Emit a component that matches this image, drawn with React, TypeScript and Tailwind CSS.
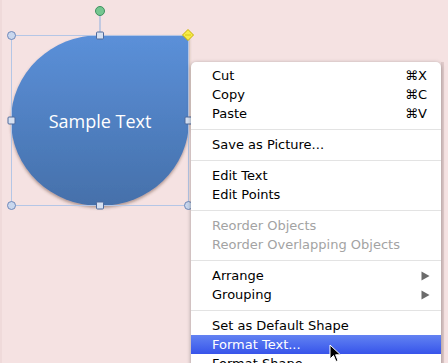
import React from "react";

type Item =
  | { kind: "item"; label: string; shortcut?: string; disabled?: boolean; sub?: boolean; active?: boolean }
  | { kind: "sep" };

const items: Item[] = [
  { kind: "item", label: "Cut", shortcut: "⌘X" },
  { kind: "item", label: "Copy", shortcut: "⌘C" },
  { kind: "item", label: "Paste", shortcut: "⌘V" },
  { kind: "sep" },
  { kind: "item", label: "Save as Picture..." },
  { kind: "sep" },
  { kind: "item", label: "Edit Text" },
  { kind: "item", label: "Edit Points" },
  { kind: "sep" },
  { kind: "item", label: "Reorder Objects", disabled: true },
  { kind: "item", label: "Reorder Overlapping Objects", disabled: true },
  { kind: "sep" },
  { kind: "item", label: "Arrange", sub: true },
  { kind: "item", label: "Grouping", sub: true },
  { kind: "sep" },
  { kind: "item", label: "Set as Default Shape" },
  { kind: "item", label: "Format Text...", active: true },
  { kind: "item", label: "Format Shape..." },
];

function Shape() {
  return (
    <svg className="absolute left-0 top-0" width="200" height="220" viewBox="0 0 200 220">
      <defs>
        <linearGradient id="g" x1="0" y1="0" x2="0" y2="1">
          <stop offset="0" stopColor="#5b90d9" />
          <stop offset="1" stopColor="#4570aa" />
        </linearGradient>
        <filter id="sh" x="-10%" y="-10%" width="120%" height="125%">
          <feDropShadow dx="0" dy="2" stdDeviation="1.5" floodColor="#5a3a2a" floodOpacity="0.45" />
        </filter>
      </defs>
      <path
        d="M 100 35 L 189 35 L 189 120.5 A 89 85.5 0 1 1 100 35 Z"
        fill="url(#g)"
        filter="url(#sh)"
      />
      <rect x="11.5" y="35.5" width="177" height="170" fill="none" stroke="#b4c6e6" strokeWidth="1" />
      <line x1="100" y1="15" x2="100" y2="32" stroke="#8fb0e0" strokeWidth="1" />
      <circle cx="100" cy="11" r="4.5" fill="#74c690" stroke="#3f9160" strokeWidth="1" />
      {[
        [11.5, 35.5],
        [11.5, 205.5],
        [188.5, 205.5],
      ].map(([x, y], i) => (
        <circle key={i} cx={x} cy={y} r="4" fill="#c9d7ee" stroke="#6f88b8" strokeWidth="1" />
      ))}
      {[
        [100, 35.5],
        [11.5, 120.5],
        [188.5, 120.5],
        [100, 205.5],
      ].map(([x, y], i) => (
        <rect key={i} x={x - 3.5} y={y - 3.5} width="7" height="7" rx="1" fill="#d6e0f1" stroke="#4f6a9c" strokeWidth="1" />
      ))}
      <path d="M 188 29.5 L 193.5 35 L 188 40.5 L 182.5 35 Z" fill="#f5ec4a" stroke="#c9b100" strokeWidth="1" />
      <line x1="185" y1="35" x2="191" y2="35" stroke="#d8c300" strokeWidth="0.8" />
    </svg>
  );
}

function Cursor() {
  return (
    <svg className="absolute left-[329px] top-[344px]" width="14" height="20" viewBox="0 0 14 20">
      <path d="M1 1 L1 15 L4.5 11.5 L7 17.5 L9 16.6 L6.6 10.8 L11.5 10.8 Z" fill="#000" stroke="#fff" strokeWidth="1" strokeLinejoin="round" />
    </svg>
  );
}

export default function App() {
  return (
    <div className="relative w-[448px] h-[363px] overflow-hidden bg-[#f5e2e2]" style={{ fontFamily: '"DejaVu Sans", sans-serif' }}>
      <div className="absolute left-0 top-0 w-[2px] h-full bg-[#efdada]" />
      <Shape />
      <div className="absolute left-[100px] top-[112px] w-0 flex justify-center">
        <span className="whitespace-nowrap text-white text-[18px] leading-none" style={{ fontFamily: '"Open Sans", sans-serif' }}>
          Sample Text
        </span>
      </div>
      <div className="absolute left-[441px] top-[62px] w-[3px] h-[301px] bg-[#e2cccc]" />
      <div className="absolute left-[191px] top-[62px] w-[250px] pt-[4px] bg-white rounded-t-[5px] shadow-[0_1px_4px_rgba(0,0,0,0.35)]">
        {items.map((it, i) =>
          it.kind === "sep" ? (
            <div key={i} className="h-[12px] flex items-center">
              <div className="w-full h-px bg-[#e3e3e3]" />
            </div>
          ) : (
            <div
              key={i}
              className={
                "h-[19px] flex items-center pl-[21px] pr-[14px] text-[13px] " +
                (it.active
                  ? "bg-gradient-to-b from-[#6382f2] to-[#3853ea] text-white"
                  : it.disabled
                  ? "text-[#a3a3a3]"
                  : "text-black")
              }
            >
              <span className="flex-1 whitespace-nowrap">{it.label}</span>
              {it.shortcut && <span className="whitespace-nowrap">{it.shortcut}</span>}
              {it.sub && (
                <svg width="9" height="10" viewBox="0 0 9 10" className="mr-[-3px]">
                  <path d="M0.5 0.5 L8.5 5 L0.5 9.5 Z" fill="#6b6b6b" />
                </svg>
              )}
            </div>
          )
        )}
      </div>
      <Cursor />
    </div>
  );
}
